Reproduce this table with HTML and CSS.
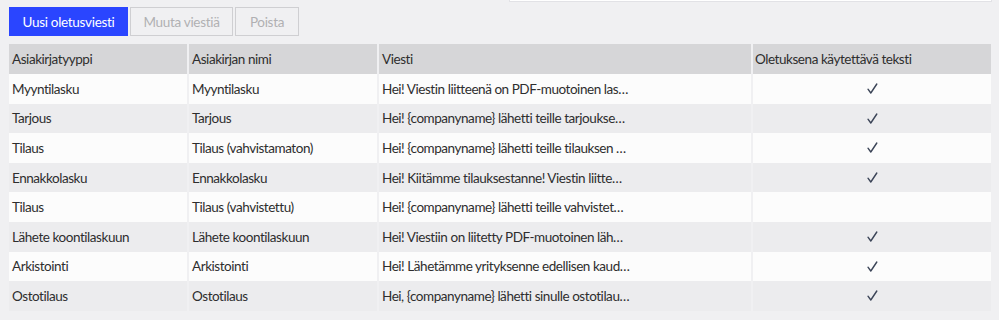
FILE: index.html
```html
<!DOCTYPE html>
<html lang="fi">
<head>
<meta charset="utf-8">
<link rel="stylesheet" href="styles.css">
</head>
<body>
<div class="page">
  <div class="searchbox"></div>
  <div class="toolbar">
    <button class="btn btn-primary">Uusi oletusviesti</button>
    <button class="btn btn-disabled btn-edit">Muuta viestiä</button>
    <button class="btn btn-disabled btn-del">Poista</button>
  </div>
  <table class="grid">
    <colgroup>
      <col class="c1"><col class="c2"><col class="c3"><col class="c4">
    </colgroup>
    <thead>
      <tr><th>Asiakirjatyyppi</th><th>Asiakirjan nimi</th><th>Viesti</th><th>Oletuksena käytettävä teksti</th></tr>
    </thead>
    <tbody>
      <tr><td>Myyntilasku</td><td>Myyntilasku</td><td>Hei! Viestin liitteenä on PDF-muotoinen las…</td><td class="chk"><svg class="tick" width="11" height="11" viewBox="0 0 11 11"><polyline points="1,6.2 3.8,10 9.8,1"/></svg></td></tr>
      <tr><td>Tarjous</td><td>Tarjous</td><td>Hei! {companyname} lähetti teille tarjoukse…</td><td class="chk"><svg class="tick" width="11" height="11" viewBox="0 0 11 11"><polyline points="1,6.2 3.8,10 9.8,1"/></svg></td></tr>
      <tr><td>Tilaus</td><td>Tilaus (vahvistamaton)</td><td>Hei! {companyname} lähetti teille tilauksen …</td><td class="chk"><svg class="tick" width="11" height="11" viewBox="0 0 11 11"><polyline points="1,6.2 3.8,10 9.8,1"/></svg></td></tr>
      <tr><td>Ennakkolasku</td><td>Ennakkolasku</td><td>Hei! Kiitämme tilauksestanne! Viestin liitte…</td><td class="chk"><svg class="tick" width="11" height="11" viewBox="0 0 11 11"><polyline points="1,6.2 3.8,10 9.8,1"/></svg></td></tr>
      <tr><td>Tilaus</td><td>Tilaus (vahvistettu)</td><td>Hei! {companyname} lähetti teille vahvistet…</td><td class="chk"></td></tr>
      <tr><td>Lähete koontilaskuun</td><td>Lähete koontilaskuun</td><td>Hei! Viestiin on liitetty PDF-muotoinen läh…</td><td class="chk"><svg class="tick" width="11" height="11" viewBox="0 0 11 11"><polyline points="1,6.2 3.8,10 9.8,1"/></svg></td></tr>
      <tr><td>Arkistointi</td><td>Arkistointi</td><td>Hei! Lähetämme yrityksenne edellisen kaud…</td><td class="chk"><svg class="tick" width="11" height="11" viewBox="0 0 11 11"><polyline points="1,6.2 3.8,10 9.8,1"/></svg></td></tr>
      <tr><td>Ostotilaus</td><td>Ostotilaus</td><td>Hei, {companyname} lähetti sinulle ostotilau…</td><td class="chk"><svg class="tick" width="11" height="11" viewBox="0 0 11 11"><polyline points="1,6.2 3.8,10 9.8,1"/></svg></td></tr>
    </tbody>
  </table>
</div>
</body>
</html>
```
FILE: styles.css
```css
html, body {
  margin: 0;
  padding: 0;
  background: #f0f0f2;
  font-family: Lato, "Open Sans", sans-serif;
  color: #2e2e2e;
}
.page {
  position: relative;
  width: 999px;
  height: 320px;
  overflow: hidden;
}
.searchbox {
  position: absolute;
  left: 509px;
  top: -20px;
  width: 481px;
  height: 20px;
  background: #fff;
  border: 1px solid #e2e2e6;
}
.toolbar {
  display: flex;
  gap: 2px;
  padding: 7px 0 0 9px;
  height: 29px;
}
.btn {
  font-family: Lato, "Open Sans", sans-serif;
  font-size: 13.5px;
  letter-spacing: -0.3px;
  height: 29px;
  margin: 0;
  padding: 0;
  border: 1px solid #cfcfd2;
  background: #f0f0f2;
  color: #b0b0b3;
  text-align: center;
}
.btn-primary {
  width: 119px;
  background: #2a45ff;
  border-color: #2a45ff;
  color: #fff;
}
.btn-edit { width: 103px; }
.btn-del { width: 64px; }
.grid {
  margin: 8px 0 0 7px;
  width: 986px;
  border-collapse: separate;
  border-spacing: 2px 0;
  table-layout: fixed;
  font-size: 13.5px;
  letter-spacing: -0.45px;
}
.c1 { width: 178px; }
.c2 { width: 188px; }
.c3 { width: 372px; }
.c4 { width: 238px; }
.grid th {
  background: #d6d6d8;
  font-weight: normal;
  text-align: left;
  height: 30px;
  padding: 0 0 0 3px;
  color: #2e2e2e;
}
.grid td {
  height: 29.6px;
  padding: 0 0 0 3px;
  white-space: nowrap;
  overflow: hidden;
}
.grid th:last-child { padding-left: 2px; }
.grid tbody tr:nth-child(odd) td { background: #fcfcfc; }
.grid tbody tr:nth-child(even) td { background: #ececee; }
.grid td.chk {
  text-align: center;
  padding: 0;
  line-height: 0;
}
.tick {
  fill: none;
  stroke: #3c4558;
  stroke-width: 1.4;
  stroke-linecap: round;
  stroke-linejoin: round;
}
```
